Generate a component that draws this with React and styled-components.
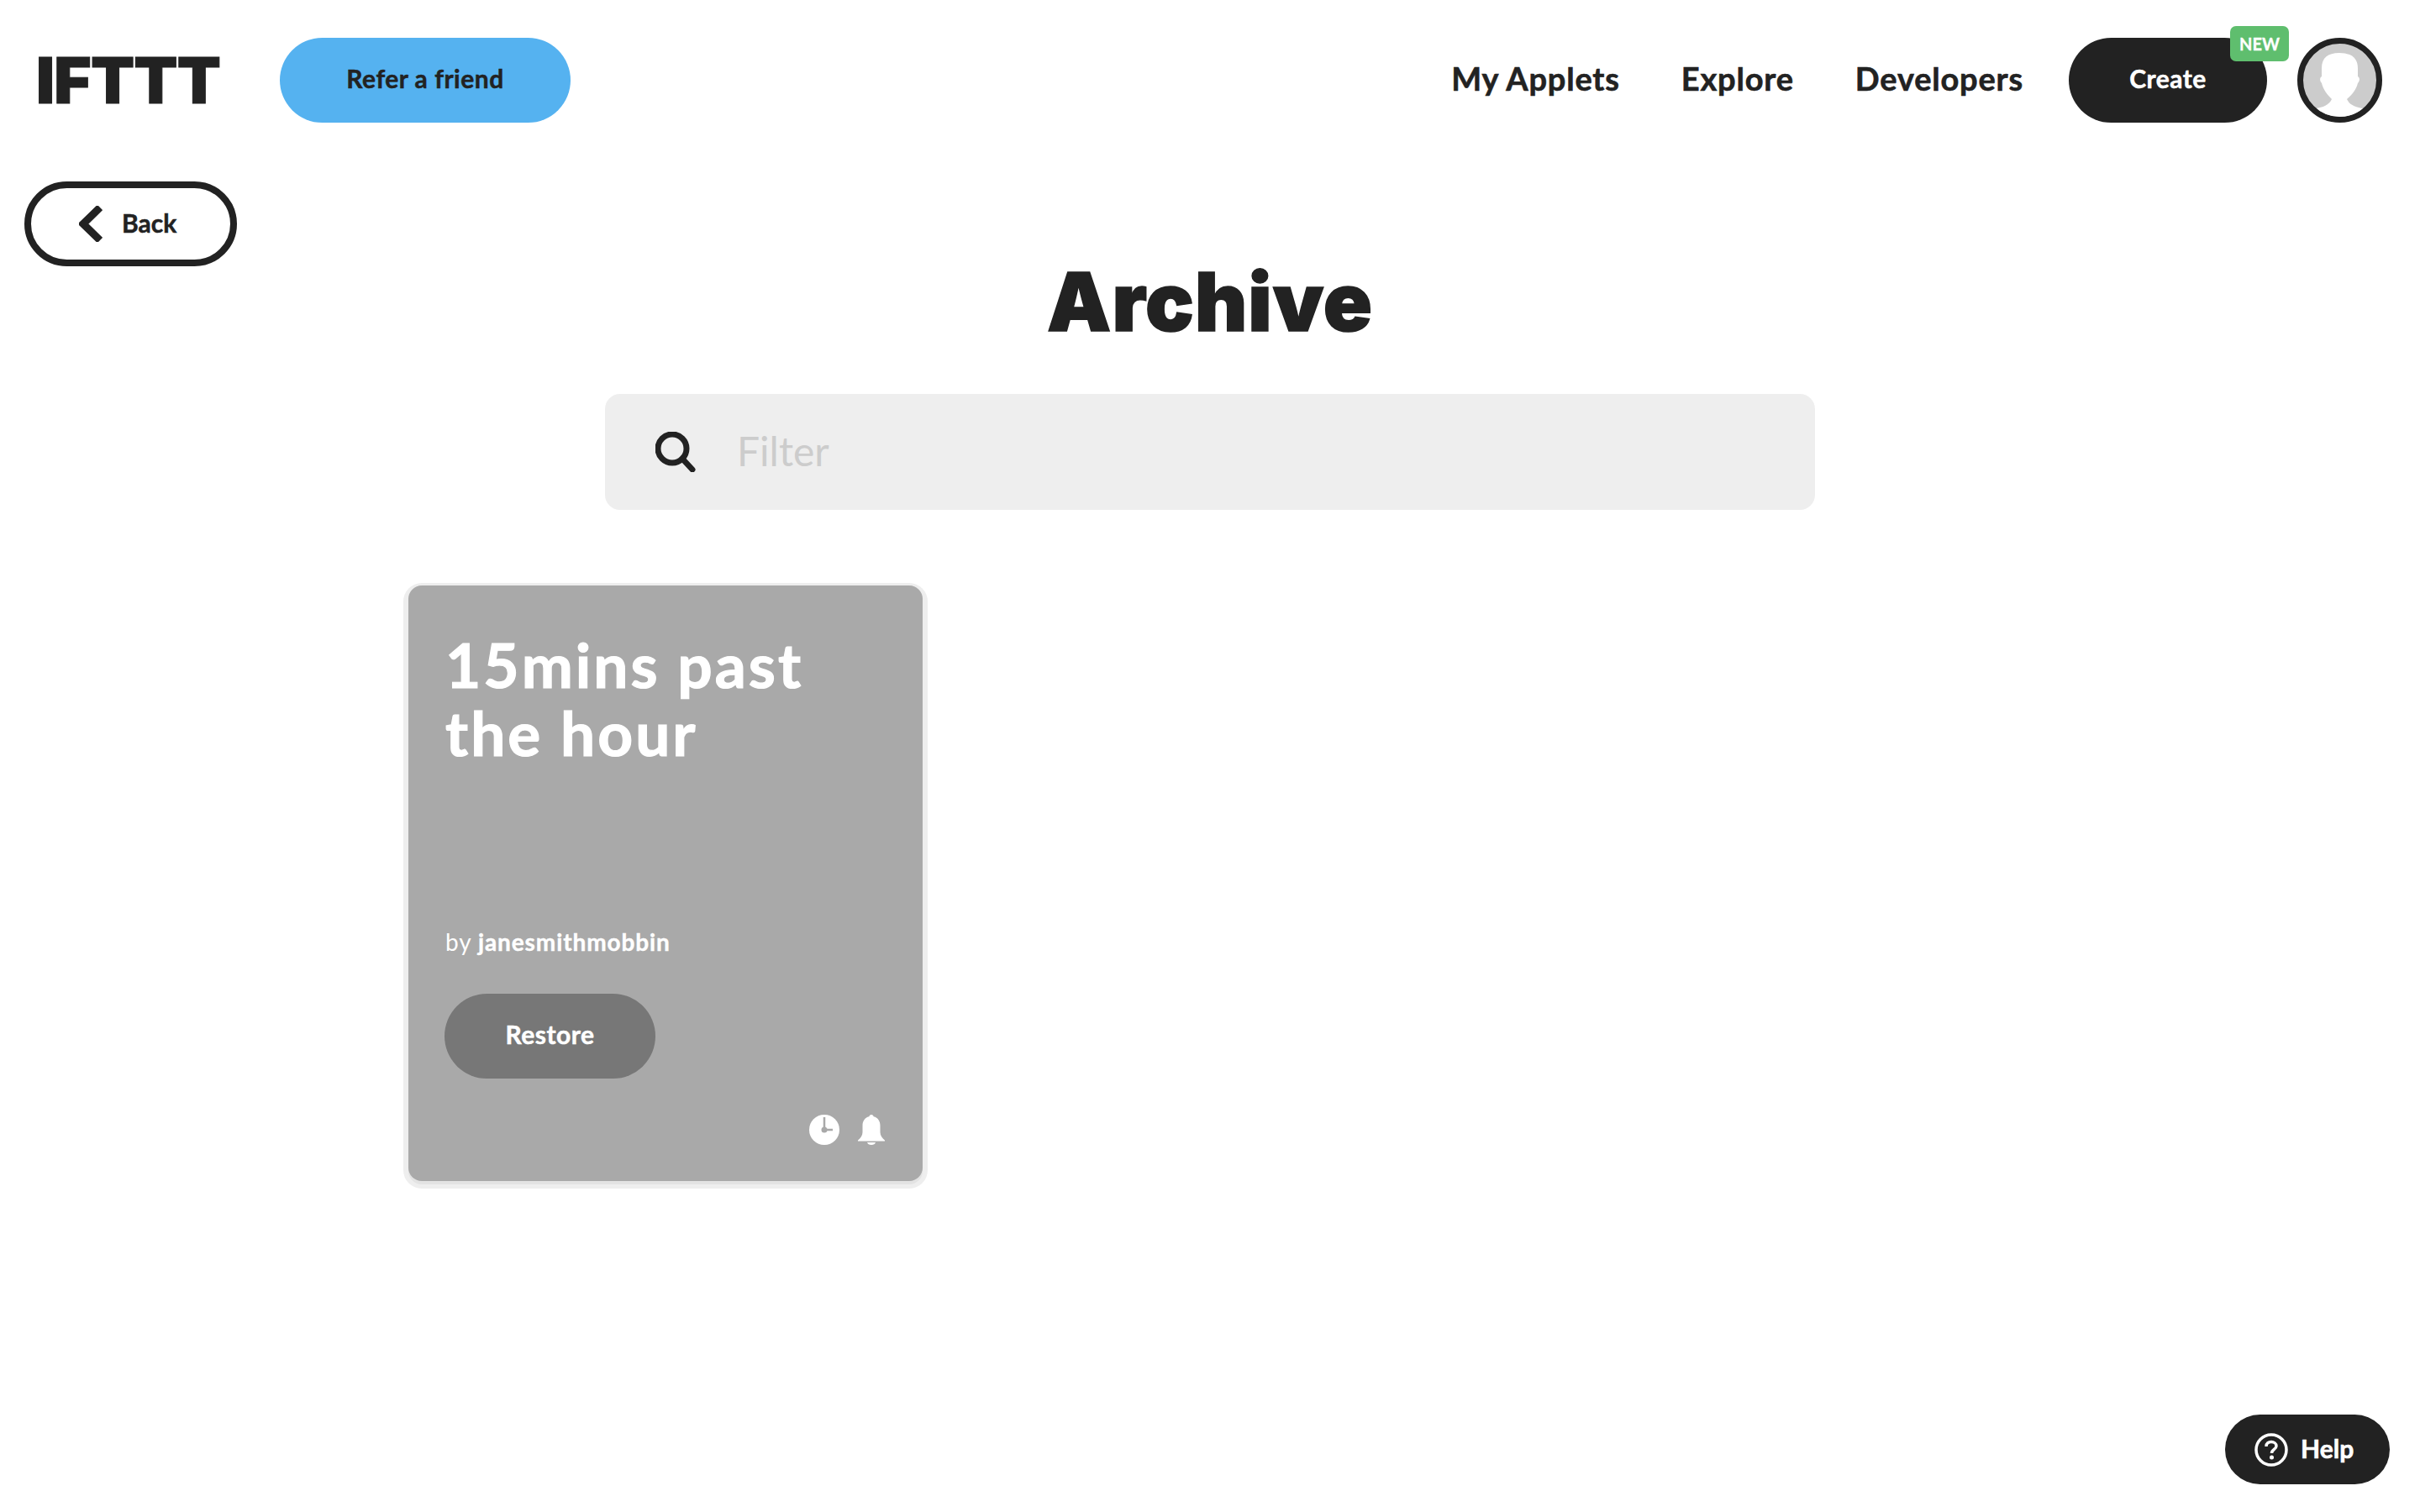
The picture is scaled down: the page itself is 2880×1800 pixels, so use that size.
import React from "react";
import styled, { createGlobalStyle } from "styled-components";

const Global = createGlobalStyle`
  html, body { margin: 0; padding: 0; background: #fff; }
  body { font-family: Lato, "Noto Sans", sans-serif; color: #222; }
  * { box-sizing: border-box; }
`;
const Page = styled.div`
  width: 2880px;
  height: 1800px;
  overflow: hidden;
`;
const Header = styled.header`
  display: flex;
  align-items: center;
  height: 101px;
  margin-top: 45px;
  padding: 0 45px;
`;
const Logo = styled.div`
  width: 288px;
  margin-left: -2px;
  margin-right: 2px;
  font: 900 76px/101px Inter, sans-serif;
  letter-spacing: -0.8px;
  color: #222;
  -webkit-text-stroke: 1px #222;
`;
const Pill = styled.a`
  position: relative;
  display: flex;
  align-items: center;
  justify-content: center;
  height: 101px;
  padding-bottom: 5px;
  border-radius: 51px;
  font-weight: 700;
  font-size: 30px;
  letter-spacing: 0.5px;
  -webkit-text-stroke: 0.5px ${(p) => p.$fg};
  background: ${(p) => p.$bg};
  color: ${(p) => p.$fg};
  width: ${(p) => p.$w}px;
`;
const Nav = styled.nav`
  display: flex;
  align-items: center;
  margin-left: auto;
  gap: 73px;
  margin-right: 54px;
  padding-bottom: 5px;
`;
const NavLink = styled.a`
  font-size: 38px;
  font-weight: 700;
  letter-spacing: 0.8px;
  -webkit-text-stroke: 0.6px #222;
  color: #222;
`;
const Badge = styled.span`
  position: absolute;
  top: -14px;
  right: -26px;
  width: 70px;
  height: 42px;
  display: flex;
  align-items: center;
  justify-content: center;
  background: #5fbe6e;
  border-radius: 7px;
  font-size: 20px;
  font-weight: 700;
  letter-spacing: 0;
  -webkit-text-stroke: 0.3px #fff;
  color: #fff;
`;
const Avatar = styled.div`
  width: 101px;
  height: 101px;
  margin-left: 36px;
  border: 7px solid #222;
  border-radius: 50%;
  overflow: hidden;
  background: #ccc;
  svg { display: block; margin: -7px; }
`;
const BackRow = styled.div`
  margin: 70px 0 0 29px;
`;
const BackButton = styled.a`
  display: flex;
  align-items: center;
  width: 253px;
  height: 101px;
  padding-left: 57px;
  gap: 23px;
  border: 8px solid #222;
  border-radius: 51px;
  font-size: 30px;
  font-weight: 700;
  -webkit-text-stroke: 0.5px #222;
  color: #222;
  span { margin-bottom: 4px; }
`;
const Title = styled.h1`
  margin: -18px 0 0;
  text-align: center;
  font: 900 96px/120px Inter, sans-serif;
  letter-spacing: 1px;
  -webkit-text-stroke: 1.5px #222;
  color: #222;
`;
const Search = styled.div`
  display: flex;
  align-items: center;
  width: 1440px;
  height: 138px;
  margin: 50px auto 0;
  padding-left: 60px;
  gap: 49px;
  background: #eee;
  border-radius: 18px;
`;
const FilterText = styled.span`
  margin-bottom: 3px;
  font-size: 48px;
  color: #ccc;
`;
const Grid = styled.div`
  display: grid;
  grid-template-columns: repeat(3, 612px);
  gap: 36px;
  width: 1908px;
  margin: 90px auto 0;
`;
const Card = styled.article`
  position: relative;
  display: flex;
  flex-direction: column;
  height: 709px;
  padding: 54px 44px 0;
  background: #a9a9a9;
  border-radius: 16px;
  box-shadow: 0 4px 0 0 #e3e3e3, 0 3px 0 6px #eee;
  color: #fff;
`;
const CardTitle = styled.h2`
  margin: 0;
  font-size: 73px;
  line-height: 81px;
  font-weight: 700;
  letter-spacing: 3px;
  -webkit-text-stroke: 1.2px #fff;
  color: #fff;
`;
const Author = styled.div`
  margin-top: 190px;
  font-size: 28px;
  line-height: 36px;
  letter-spacing: 0.9px;
  b { font-weight: 700; -webkit-text-stroke: 0.4px #fff; }
`;
const RestoreButton = styled(Pill)`
  margin-top: 44px;
  margin-left: -1px;
`;
const Icons = styled.div`
  position: absolute;
  right: 45px;
  bottom: 43px;
  display: flex;
  gap: 22px;
  svg { display: block; }
`;
const Help = styled.a`
  position: fixed;
  left: 2648px;
  top: 1684px;
  display: flex;
  align-items: center;
  width: 196px;
  height: 83px;
  padding-left: 35px;
  gap: 15px;
  background: #222;
  border-radius: 42px;
  color: #fff;
  font-size: 30px;
  font-weight: 700;
  -webkit-text-stroke: 0.6px #fff;
  span { margin-bottom: 3px; }
`;

export default function App() {
  return (
    <Page>
      <Global />
      <Header>
        <Logo>IFTTT</Logo>
        <Pill $bg="#55b2f0" $fg="#222" $w={346}>Refer a friend</Pill>
        <Nav>
          <NavLink>My Applets</NavLink>
          <NavLink>Explore</NavLink>
          <NavLink>Developers</NavLink>
        </Nav>
        <Pill $bg="#222" $fg="#fff" $w={236}>
          Create
          <Badge>NEW</Badge>
        </Pill>
        <Avatar>
          <svg width="101" height="101" viewBox="0 0 101 101">
            <path
              fill="#fff"
              d="M50 18C36 18 29 24 29 36L29 46C26 48 27 52 29 54C31 62 36 68 41 73C38 80 30 83 22 84L22 101L79 101L79 84C70 83 62 80 59 73C65 68 70 62 72 54C74 52 75 48 72 46L72 36C72 24 64 18 50 18Z"
            />
          </svg>
        </Avatar>
      </Header>
      <BackRow>
        <BackButton>
          <svg width="28" height="43" viewBox="0 0 28 43">
            <path d="M25 2L5 21.5L25 41" fill="none" stroke="#222" strokeWidth="9" />
          </svg>
          <span>Back</span>
        </BackButton>
      </BackRow>
      <Title>Archive</Title>
      <Search>
        <svg width="48" height="48" viewBox="0 0 48 48">
          <circle cx="20" cy="20" r="17" fill="none" stroke="#222" strokeWidth="7" />
          <path d="M32 32L44 45" stroke="#222" strokeWidth="7" strokeLinecap="round" />
        </svg>
        <FilterText>Filter</FilterText>
      </Search>
      <Grid>
        <Card>
          <CardTitle>
            15mins past
            <br />
            the hour
          </CardTitle>
          <Author>
            by <b>janesmithmobbin</b>
          </Author>
          <RestoreButton $bg="#777" $fg="#fff" $w={251}>Restore</RestoreButton>
          <Icons>
            <svg width="36" height="36" viewBox="0 0 36 36">
              <circle cx="18" cy="18" r="18" fill="#fff" />
              <path d="M18 3V18H28" fill="none" stroke="#a9a9a9" strokeWidth="2.5" />
              <circle cx="18" cy="18" r="3.5" fill="#a9a9a9" />
            </svg>
            <svg width="32" height="36" viewBox="0 0 32 36">
              <path
                fill="#fff"
                d="M16 0C17.5 0 18.5 1 18.7 2.300C24 3.500 26.500 8 26.500 13L26.500 21C26.500 25 29 28 32 30.500L32 31.500L0 31.500L0 30.500C3 28 5.500 25 5.500 21L5.500 13C5.500 8 8 3.500 13.300 2.300C13.500 1 14.500 0 16 0ZM11 33L21 33C20.500 35 18.500 36 16 36C13.500 36 11.500 35 11 33Z"
              />
            </svg>
          </Icons>
        </Card>
      </Grid>
      <Help>
        <svg width="40" height="40" viewBox="0 0 40 40">
          <circle cx="20" cy="20" r="18" fill="none" stroke="#fff" strokeWidth="3.5" />
          <path d="M14 16C14 12 17 10.500 20 10.500C23 10.500 26 12.500 26 15.500C26 19.500 20.500 19.500 20.500 24" fill="none" stroke="#fff" strokeWidth="3.5" />
          <circle cx="20.500" cy="29" r="2.500" fill="#fff" />
        </svg>
        <span>Help</span>
      </Help>
    </Page>
  );
}
